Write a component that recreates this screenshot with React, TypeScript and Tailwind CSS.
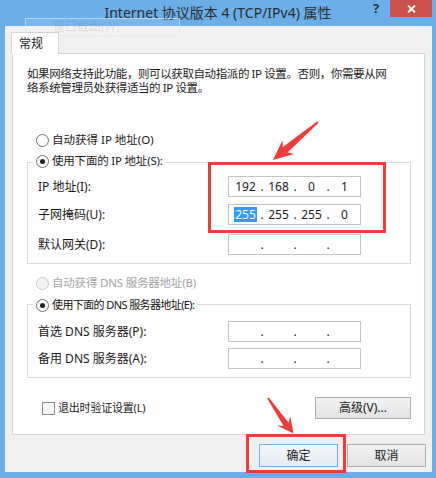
import React from "react";

const FONT = { fontFamily: '"Noto Sans", "Noto Sans CJK SC", sans-serif' };

function Radio({ checked, disabled }: { checked?: boolean; disabled?: boolean }) {
    return (
        <span
            className={`w-[13px] h-[13px] rounded-full border flex items-center justify-center shrink-0 ${
                disabled ? "border-[#c6c6c6] bg-[#f4f4f4]" : "border-[#6f6f6f] bg-white"
            }`}
        >
            {checked && <span className="w-[5px] h-[5px] rounded-full bg-[#222]" />}
        </span>
    );
}

function IpBox({ parts, highlightFirst }: { parts: string[]; highlightFirst?: boolean }) {
    return (
        <div className="w-[133px] h-[21px] border border-[#c3c3c3] bg-white flex items-center pl-[3px] text-[12px] text-[#1a1a1a]">
            {parts.map((p, i) => (
                <React.Fragment key={i}>
                    <span className="w-[27px] text-center leading-[15px]">
                        {highlightFirst && i === 0 ? (
                            <span className="bg-[#3399ff] text-white inline-block px-[1px]">{p}</span>
                        ) : (
                            p
                        )}
                    </span>
                    {i < 3 && <span className="w-[6px] text-center leading-[15px]">.</span>}
                </React.Fragment>
            ))}
        </div>
    );
}

function Row({ label, children, mt }: { label: string; children: React.ReactNode; mt: string }) {
    return (
        <div className={`flex items-center pl-[10px] ${mt}`}>
            <span className="w-[190px] text-[12px] text-[#1a1a1a]">{label}</span>
            {children}
        </div>
    );
}

export default function App() {
    return (
        <div className="w-[436px] h-[478px] bg-[#6aaeea] flex flex-col relative overflow-hidden" style={FONT}>
            {/* Title bar */}
            <div className="h-[26px] relative flex items-center justify-center pb-[2px]">
                <span className="text-[14px] text-[#2c2c2c]">Internet 协议版本 4 (TCP/IPv4) 属性</span>
                <span className="absolute left-[373px] top-[-1px] text-[13px] font-bold text-[#243444]">?</span>
                <div className="absolute right-[4px] top-0 w-[42px] h-[17px] bg-[#c9504b] flex items-center justify-center">
                    <svg width="9" height="8" viewBox="0 0 9 8">
                        <path d="M1 0.5 L8 7.5 M8 0.5 L1 7.5" stroke="white" strokeWidth="1.8" />
                    </svg>
                </div>
            </div>

            {/* Ghost overlay from capture tool */}
            <div className="absolute left-[25px] top-[18px] w-[155px] h-[18px] border border-[#dfe6ee]/60 bg-white/10 flex items-center pl-[27px]">
                <span className="text-[12px] text-[#000]/10">窗口截图(W)</span>
            </div>

            {/* Dialog body */}
            <div className="ml-[5px] mr-[4px] h-[446px] bg-[#f0f0f0] flex flex-col pt-[6px]">
                <div className="ml-[6px] w-[48px] h-[22px] bg-white border border-b-0 border-[#d4d4d4] relative z-10 pl-[7px] pt-[2px] text-[12px] text-[#1a1a1a]">
                    常规
                </div>
                <div className="ml-[7px] -mt-px w-[413px] h-[382px] bg-white border border-[#d4d4d4] flex flex-col">
                    <p className="pl-[14px] pt-[13px] text-[11.5px] tracking-[-0.4px] leading-[14px] text-[#1a1a1a] whitespace-nowrap">
                        如果网络支持此功能，则可以获取自动指派的 IP 设置。否则，你需要从网
                        <br />
                        络系统管理员处获得适当的 IP 设置。
                    </p>

                    <div className="mt-[35px] ml-[23px] h-[20px] flex items-center gap-[3px] text-[11.5px] text-[#1a1a1a]">
                        <Radio />
                        <span>自动获得 IP 地址(O)</span>
                    </div>

                    <div className="mt-[12px] ml-[14px] w-[384px] h-[102px] border border-[#dadada]">
                        <div className="-mt-[12px] ml-[5px] w-fit h-[20px] bg-white px-[3px] flex items-center gap-[3px] text-[11.5px] tracking-[-0.2px] text-[#1a1a1a]">
                            <Radio checked />
                            <span>使用下面的 IP 地址(S):</span>
                        </div>
                        <Row label="IP 地址(I):" mt="mt-[5px]">
                            <IpBox parts={["192", "168", "0", "1"]} />
                        </Row>
                        <Row label="子网掩码(U):" mt="mt-[7px]">
                            <IpBox parts={["255", "255", "255", "0"]} highlightFirst />
                        </Row>
                        <Row label="默认网关(D):" mt="mt-[9px]">
                            <IpBox parts={["", "", "", ""]} />
                        </Row>
                    </div>

                    <div className="mt-[9px] ml-[23px] h-[20px] flex items-center gap-[3px] text-[11.5px] tracking-[-0.2px] text-[#a3a3a3]">
                        <Radio disabled />
                        <span>自动获得 DNS 服务器地址(B)</span>
                    </div>

                    <div className="mt-[11px] ml-[14px] w-[384px] h-[74px] border border-[#dadada]">
                        <div className="-mt-[10px] ml-[5px] w-fit h-[20px] bg-white px-[3px] flex items-center gap-[3px] text-[11px] tracking-[-0.6px] text-[#111]">
                            <Radio checked />
                            <span>使用下面的 DNS 服务器地址(E):</span>
                        </div>
                        <Row label="首选 DNS 服务器(P):" mt="mt-[6px]">
                            <IpBox parts={["", "", "", ""]} />
                        </Row>
                        <Row label="备用 DNS 服务器(A):" mt="mt-[6px]">
                            <IpBox parts={["", "", "", ""]} />
                        </Row>
                    </div>

                    <div className="mt-[19px] h-[22px] flex items-center justify-between pl-[29px] pr-[13px]">
                        <div className="flex items-center gap-[3px] text-[11px] tracking-[-0.2px] text-[#1a1a1a]">
                            <span className="w-[13px] h-[13px] border border-[#8a8a8a] bg-[#f7f7f7]" />
                            <span>退出时验证设置(L)</span>
                        </div>
                        <button className="w-[96px] h-[22px] border border-[#adadad] bg-gradient-to-b from-[#f2f2f2] to-[#e3e3e3] text-[12px] text-[#1a1a1a]">
                            高级(V)...
                        </button>
                    </div>
                </div>

                <div className="mt-[9px] flex justify-end gap-[9px] pr-[6px]">
                    <button className="w-[79px] h-[23px] border border-[#6fb0ea] bg-gradient-to-b from-[#f3f7fb] to-[#e4ebf3] text-[12px] text-[#1a1a1a]">
                        确定
                    </button>
                    <button className="w-[79px] h-[23px] border border-[#adadad] bg-gradient-to-b from-[#f2f2f2] to-[#e3e3e3] text-[12px] text-[#1a1a1a]">
                        取消
                    </button>
                </div>
            </div>

            {/* Annotations */}
            <div className="absolute left-[208px] top-[162px] w-[178px] h-[71px] border-[3px] border-[#f03b3b]" />
            <div className="absolute left-[246px] top-[434px] w-[100px] h-[39px] border-[3px] border-[#f03b3b]" />
            <svg className="absolute left-0 top-0 pointer-events-none" width="436" height="478">
                <polygon
                    fill="#f03b3b"
                    points="317.4,121.2 282.9,147.0 282.5,140.2 273,160 294.1,154.0 287.5,152.4 318.6,122.8"
                />
                <polygon
                    fill="#f03b3b"
                    points="267.2,398.6 283.6,426.1 277.2,425.6 293.5,433.5 290.4,416.6 288.6,422.7 268.8,397.4"
                />
            </svg>
        </div>
    );
}
